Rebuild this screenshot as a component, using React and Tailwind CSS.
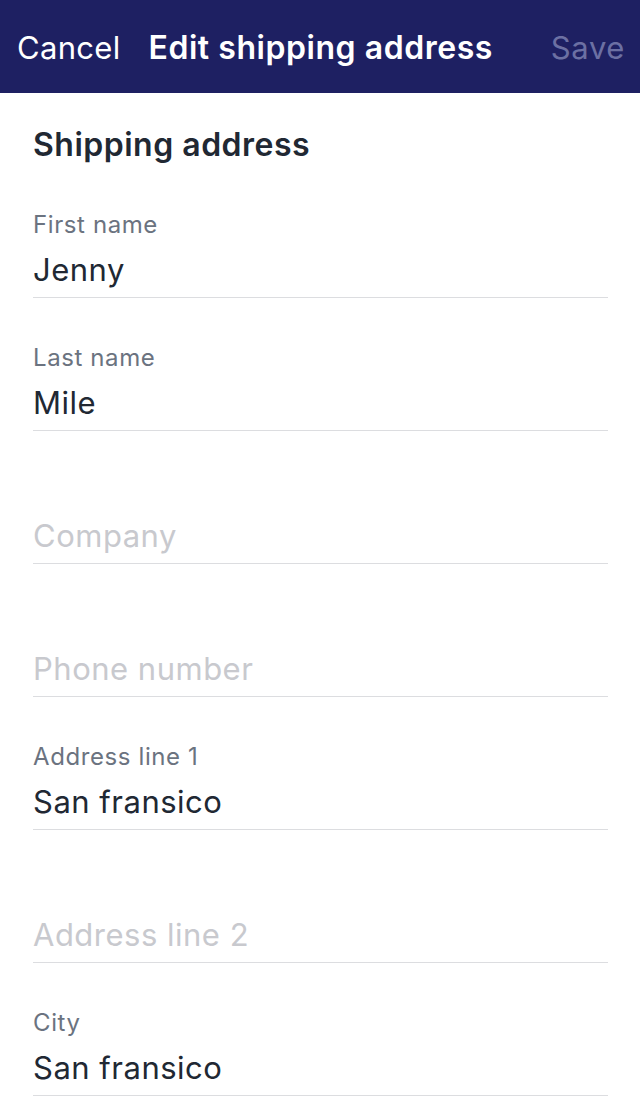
const fields = [
  { label: 'First name', value: 'Jenny' },
  { label: 'Last name', value: 'Mile' },
  { label: 'Company', value: '' },
  { label: 'Phone number', value: '' },
  { label: 'Address line 1', value: 'San fransico' },
  { label: 'Address line 2', value: '' },
  { label: 'City', value: 'San fransico' },
];

export default function App() {
  return (
    <div className="w-[640px] h-[1099px] overflow-hidden bg-white font-['Inter',sans-serif]">
      <div className="h-[93px] bg-[#1e2062] flex items-center px-[17px] pt-[3px]">
        <span className="text-[31px] text-white tracking-[0.3px]">Cancel</span>
        <span className="ml-[28px] text-[32px] font-semibold text-white tracking-[0.55px]">Edit shipping address</span>
        <span className="ml-auto mr-[-2px] text-[31px] text-[#6c70a3] tracking-[0.6px]">Save</span>
      </div>
      <div className="px-[33px]">
        <div className="h-[72px] flex items-end pb-[2px]">
          <h1 className="text-[32px] leading-[36px] font-semibold text-[#212833] tracking-[0.5px]">Shipping address</h1>
        </div>
        {fields.map((f, i) => (
          <div key={i} className="h-[133px] border-b border-[#dcdde0] flex flex-col justify-end pb-[7px] mr-[-1px]">
            {f.value ? (
              <>
                <div className="text-[24px] leading-[30px] text-[#6b7380] tracking-[0.6px]">{f.label}</div>
                <div className="mt-[10px] text-[31px] leading-[40px] text-[#212833] tracking-[0.5px]">{f.value}</div>
              </>
            ) : (
              <div className="text-[31px] leading-[40px] text-[#c8c9ce] tracking-[0.5px]">{f.label}</div>
            )}
          </div>
        ))}
      </div>
    </div>
  );
}
